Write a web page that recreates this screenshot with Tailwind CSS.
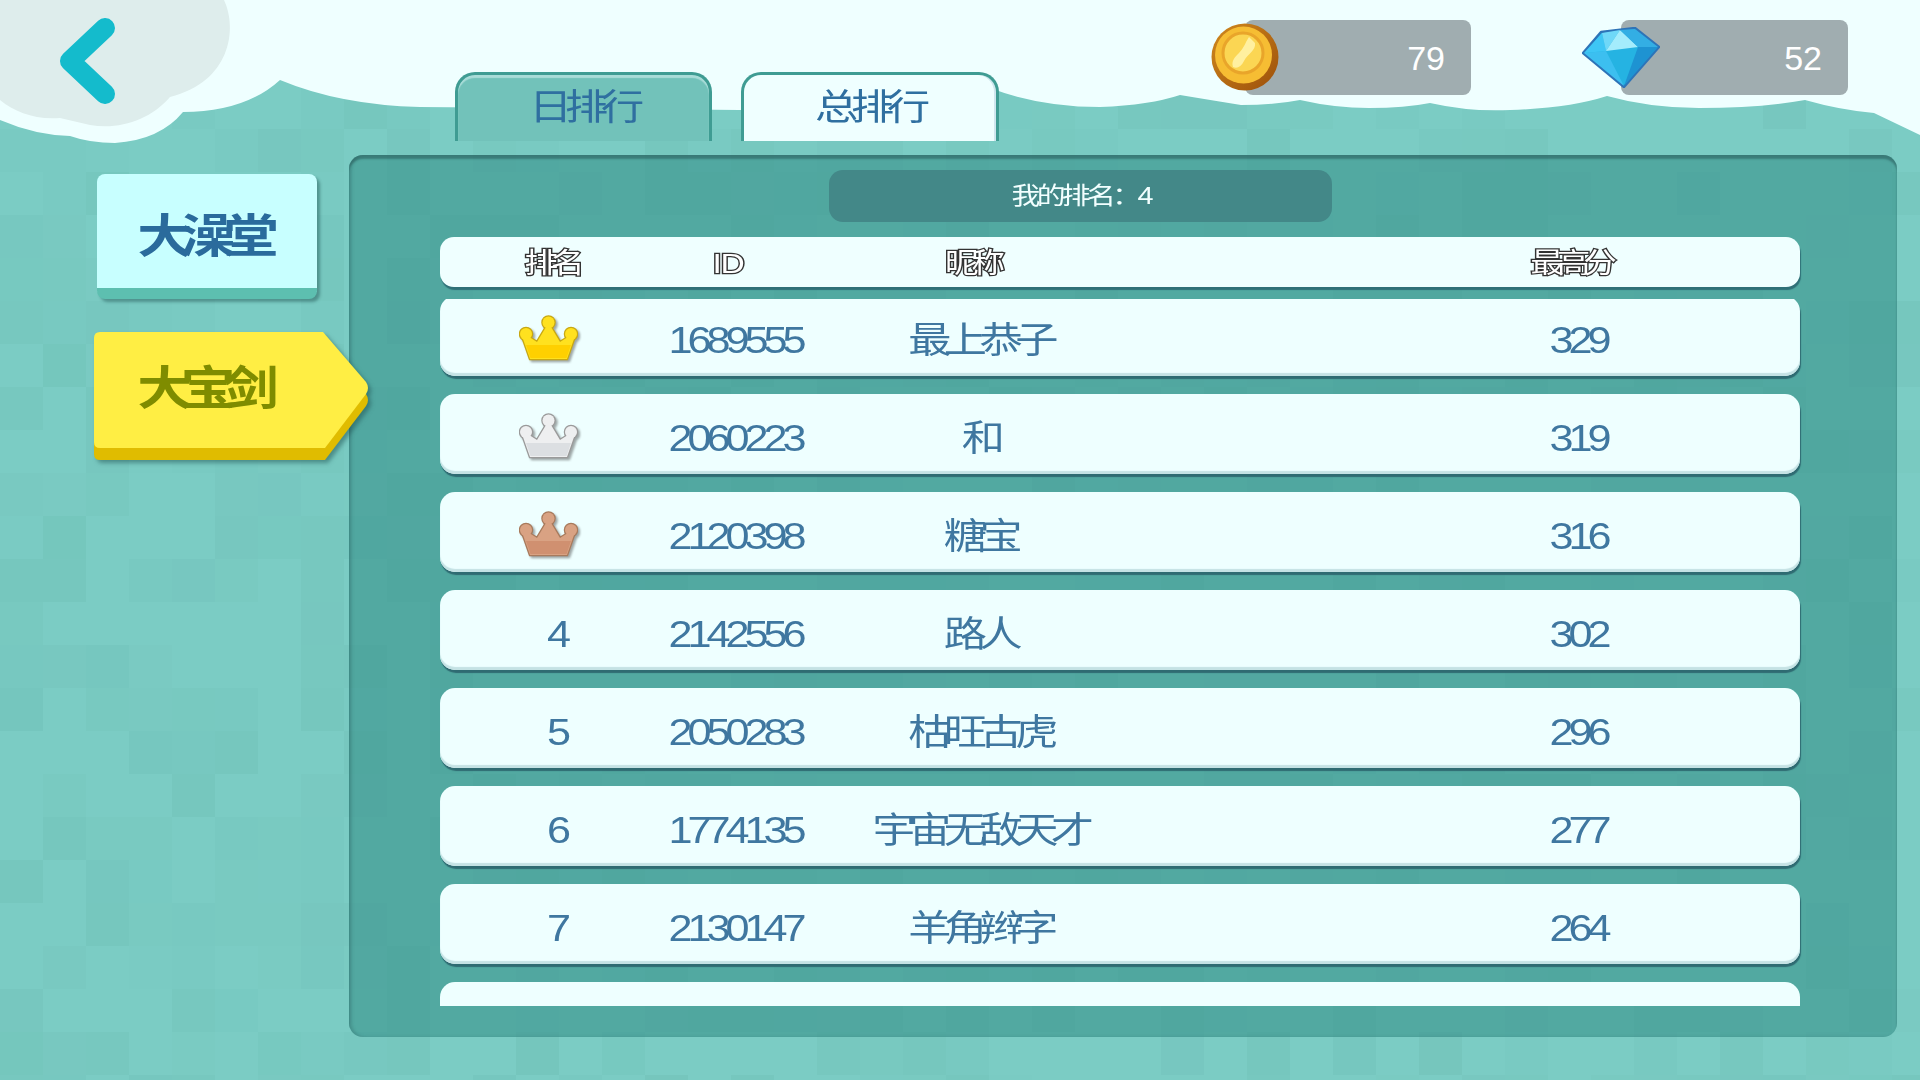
<!DOCTYPE html>
<html lang="zh">
  <head>
    <meta charset="UTF-8" />
    <title>排行榜</title>
    <script src="https://cdn.jsdelivr.net/npm/@tailwindcss/browser@4"></script>
  </head>
  <body class="bg-[#7bccc4]">
    <div class="relative h-[1080px] w-[1920px] overflow-hidden font-['Liberation_Sans','Noto_Sans_CJK_SC',sans-serif]">
      <!-- background mosaic, filled in by the script below -->
      <svg id="mosaic" class="absolute inset-0" width="1920" height="1080"></svg>

      <!-- crown shape shared by the top three rows -->
      <svg class="absolute" width="0" height="0">
        <symbol id="crown" viewBox="0 0 59 46">
          <circle cx="29.5" cy="7.5" r="6" />
          <circle cx="7" cy="19" r="6" />
          <circle cx="52" cy="19" r="6" />
          <path d="M4 24 L7 20 L18 27 L27 12 H32 L41 27 L52 20 L55 24 L48 44 H11 Z" />
        </symbol>
      </svg>

      <!-- cloud along the top -->
      <svg class="absolute inset-0" width="1920" height="160" viewBox="0 0 1920 160">
        <path fill="#efffff" d="M0 120 Q35 135 70 136 Q90 143 115 143 Q160 140 183 112 Q245 112 280 80 Q340 105 420 107 L740 110 Q870 110 990 88 Q1040 107 1100 107 Q1150 105 1180 95 Q1210 100 1241 105 Q1275 105 1300 100 Q1335 108 1369 108 Q1405 108 1430 103 Q1470 112 1510 110 Q1570 108 1607 96 Q1650 108 1699 108 Q1760 108 1805 100 Q1840 110 1874 113 L1920 135 V0 H0 Z" />
        <path fill="#deedec" d="M0 0 H224 C238 30 230 82 170 97 C150 120 120 130 90 125 L60 118 C35 120 15 112 0 100 Z" />
      </svg>

      <!-- top bar -->
      <header class="relative flex h-[141px] items-start">
        <div class="w-[455px] pl-[60px] pt-[18px]">
          <svg width="56" height="86" viewBox="60 18 56 86" fill="none" stroke="#14bbcc" stroke-width="20" stroke-linecap="round" stroke-linejoin="round">
            <path d="M105 28 L70 61 L105 94" />
          </svg>
        </div>

        <div class="mt-[72px] flex gap-[29px] text-[36px] leading-none text-[#2f6fa0]">
          <div class="flex h-[69px] w-[257px] items-center justify-center rounded-t-[20px] border-[3px] border-b-0 border-[#3f9c93] bg-[#72c2ba] shadow-[inset_0_3px_1px_#a9dcd8]">
            <span class="inline-block scale-x-[1.2] tracking-[-6px]">日排行</span>
          </div>
          <div class="flex h-[69px] w-[258px] items-center justify-center rounded-t-[20px] border-[3px] border-b-0 border-[#3f9c93] bg-[#efffff] pr-[2px] shadow-[inset_-2px_0_0_#cfe6ee]">
            <span class="inline-block scale-x-[1.2] tracking-[-6px]">总排行</span>
          </div>
        </div>

        <div class="relative ml-[246px] mt-[20px] flex h-[75px] w-[226px] items-center justify-end rounded-lg bg-[#a0adb0] pr-[26px] pt-[2px] text-[34px] text-white">
          79
          <svg class="absolute left-[-34px] top-[3px]" width="68" height="68" viewBox="0 0 68 68">
            <defs>
              <linearGradient id="coinEdge" x1="0" y1="0" x2="1" y2="1">
                <stop offset="0" stop-color="#d18a1e" />
                <stop offset="1" stop-color="#9c4f0a" />
              </linearGradient>
            </defs>
            <circle cx="34" cy="34" r="33.5" fill="url(#coinEdge)" />
            <circle cx="32.5" cy="32" r="28.5" fill="#f6bd33" />
            <circle cx="32" cy="30" r="20" fill="#fbd653" stroke="#e9a52a" stroke-width="3" />
            <path d="M38 14 L44 20 C45 28 37 30 33 38 C30 44 26 46 22 44 C20 38 24 34 28 30 C33 25 34 20 38 14 Z" fill="#fff0a0" />
          </svg>
        </div>

        <div class="relative ml-[150px] mt-[20px] flex h-[75px] w-[227px] items-center justify-end rounded-lg bg-[#a0adb0] pr-[26px] pt-[2px] text-[34px] text-white">
          52
          <svg class="absolute left-[-39px] top-[7px]" width="78" height="61" viewBox="0 0 78 61">
            <path d="M19 5 L53 1 L77 20 L42 60 L1 26 Z" fill="#25b3e2" stroke="#2d74b8" stroke-width="2.5" stroke-linejoin="round" />
            <path d="M2 26 L24 24 L42 59 Z" fill="#3cbff0" />
            <path d="M56 20 L76 20 L42 59 Z" fill="#1e93d2" />
            <path d="M20 6 L2 26 L24 24 Z" fill="#3ec6f5" />
            <path d="M20 6 L38 3 L24 24 Z" fill="#6fd8f8" />
            <path d="M38 3 L56 20 L24 24 Z" fill="#a4ecfc" />
            <path d="M38 3 L53 2 L76 20 L56 20 Z" fill="#33aee4" />
          </svg>
        </div>
      </header>

      <main class="relative mt-[14px] flex">
        <!-- category buttons -->
        <nav class="relative z-10 w-[349px] pt-[19px]">
          <div class="ml-[97px] flex h-[125px] w-[220px] items-center justify-center rounded-lg border-b-[11px] border-[#5dbfb0] bg-[#c8ffff] pr-[10px] pt-[10px] text-[46px] font-bold leading-none text-[#2a6b9c] shadow-[3px_3px_3px_rgba(30,80,80,0.45)]">
            <span class="inline-block scale-x-[1.2] tracking-[-10px]">大澡堂</span>
          </div>
          <div class="relative ml-[94px] mt-[33px] h-[128px] w-[275px]">
            <svg class="absolute inset-0 overflow-visible drop-shadow-[3px_3px_2px_rgba(30,80,80,0.5)]" width="275" height="128" viewBox="0 0 275 128">
              <path fill="#e0bc00" d="M6 12 H229 L272 62 Q276 68 272 74 L231 128 H6 Q0 128 0 122 V18 Q0 12 6 12 Z" />
              <path fill="#ffee44" d="M6 0 H229 L272 50 Q276 56 272 62 L231 116 H6 Q0 116 0 110 V6 Q0 0 6 0 Z" />
            </svg>
            <div class="relative flex h-[112px] w-[215px] items-center justify-center text-[46px] font-bold leading-none text-[#7f8c00]">
              <span class="inline-block scale-x-[1.2] tracking-[-10px]">大宝剑</span>
            </div>
          </div>
        </nav>

        <!-- ranking panel -->
        <section class="h-[882px] w-[1548px] rounded-[14px] bg-[#37918b]/60 pt-[15px] shadow-[inset_0_4px_2px_rgba(40,90,90,0.55),inset_3px_0_3px_rgba(40,90,90,0.25)]">
          <div class="ml-[480px] flex h-[52px] w-[503px] items-center justify-center rounded-[14px] bg-[#438888] text-[24px] leading-none text-[#f2ffff]">
            <span class="inline-block scale-x-[1.2] tracking-[-3px]">我的排名：4</span>
          </div>

          <div class="ml-[91px] mt-[15px] grid h-[50px] w-[1360px] grid-cols-[198px_156px_331px_1fr_200px] items-center rounded-[14px] bg-[#efffff] pl-[12px] pr-[130px] pt-[3px] text-center text-[28px] leading-none text-white shadow-[1px_3px_1px_#2f7077] [-webkit-text-stroke:2.5px_#333333] [paint-order:stroke_fill]">
            <span class="inline-block scale-x-[1.2] tracking-[-6px]">排名</span>
            <span class="inline-block scale-x-[1.2] tracking-[-1px]">ID</span>
            <span class="inline-block scale-x-[1.2] tracking-[-6px]">昵称</span>
            <span class="col-start-5 inline-block scale-x-[1.2] tracking-[-6px]">最高分</span>
          </div>

          <div class="ml-[91px] mt-[12px] h-[707px] w-[1363px] overflow-hidden">
            <ul class="-mt-[3px] flex flex-col gap-[18px] text-[36px] leading-none text-[#3f77a0]">
              <li class="grid h-[80px] w-[1360px] grid-cols-[198px_154px_335px_1fr_200px] items-center rounded-[15px] bg-[#eeffff] pl-[20px] pr-[122px] pt-[10px] text-center shadow-[inset_0_-3px_1px_#c4e2e4,1px_3px_1px_#2f6b72]">
                <span class="flex justify-center">
                  <svg class="mb-[6px] mr-[22px] drop-shadow-[2px_2px_1px_rgba(60,60,60,0.45)]" width="59" height="46" viewBox="0 0 59 46">
                    <use href="#crown" width="59" height="46" fill="#ffe11f" stroke="#c8a812" stroke-width="2.5" stroke-linejoin="round" />
                    <use href="#crown" width="59" height="46" fill="#ffe11f" />
                    <path d="M7 30 H52 L47.5 43 H11.5 Z" fill="#ffd000" />
                  </svg>
                </span>
                <span class="inline-block scale-x-[1.2] tracking-[-4.2px]">1689555</span>
                <span class="inline-block scale-x-[1.2] tracking-[-6.3px]">最上恭子</span>
                <span class="col-start-5 inline-block scale-x-[1.2] tracking-[-4.2px]">329</span>
              </li>
              <li class="grid h-[80px] w-[1360px] grid-cols-[198px_154px_335px_1fr_200px] items-center rounded-[15px] bg-[#eeffff] pl-[20px] pr-[122px] pt-[10px] text-center shadow-[inset_0_-3px_1px_#c4e2e4,1px_3px_1px_#2f6b72]">
                <span class="flex justify-center">
                  <svg class="mb-[6px] mr-[22px] drop-shadow-[2px_2px_1px_rgba(60,60,60,0.45)]" width="59" height="46" viewBox="0 0 59 46">
                    <use href="#crown" width="59" height="46" fill="#eeeff0" stroke="#9a9a9a" stroke-width="2.5" stroke-linejoin="round" />
                    <use href="#crown" width="59" height="46" fill="#eeeff0" />
                    <path d="M7 30 H52 L47.5 43 H11.5 Z" fill="#dcdfe2" />
                  </svg>
                </span>
                <span class="inline-block scale-x-[1.2] tracking-[-4.2px]">2060223</span>
                <span class="inline-block scale-x-[1.2] tracking-[-6.3px]">和</span>
                <span class="col-start-5 inline-block scale-x-[1.2] tracking-[-4.2px]">319</span>
              </li>
              <li class="grid h-[80px] w-[1360px] grid-cols-[198px_154px_335px_1fr_200px] items-center rounded-[15px] bg-[#eeffff] pl-[20px] pr-[122px] pt-[10px] text-center shadow-[inset_0_-3px_1px_#c4e2e4,1px_3px_1px_#2f6b72]">
                <span class="flex justify-center">
                  <svg class="mb-[6px] mr-[22px] drop-shadow-[2px_2px_1px_rgba(60,60,60,0.45)]" width="59" height="46" viewBox="0 0 59 46">
                    <use href="#crown" width="59" height="46" fill="#d9a283" stroke="#a87a5c" stroke-width="2.5" stroke-linejoin="round" />
                    <use href="#crown" width="59" height="46" fill="#d9a283" />
                    <path d="M7 30 H52 L47.5 43 H11.5 Z" fill="#d09070" />
                  </svg>
                </span>
                <span class="inline-block scale-x-[1.2] tracking-[-4.2px]">2120398</span>
                <span class="inline-block scale-x-[1.2] tracking-[-6.3px]">糖宝</span>
                <span class="col-start-5 inline-block scale-x-[1.2] tracking-[-4.2px]">316</span>
              </li>
              <li class="grid h-[80px] w-[1360px] grid-cols-[198px_154px_335px_1fr_200px] items-center rounded-[15px] bg-[#eeffff] pl-[20px] pr-[122px] pt-[10px] text-center shadow-[inset_0_-3px_1px_#c4e2e4,1px_3px_1px_#2f6b72]">
                <span class="inline-block scale-x-[1.2]">4</span>
                <span class="inline-block scale-x-[1.2] tracking-[-4.2px]">2142556</span>
                <span class="inline-block scale-x-[1.2] tracking-[-6.3px]">路人</span>
                <span class="col-start-5 inline-block scale-x-[1.2] tracking-[-4.2px]">302</span>
              </li>
              <li class="grid h-[80px] w-[1360px] grid-cols-[198px_154px_335px_1fr_200px] items-center rounded-[15px] bg-[#eeffff] pl-[20px] pr-[122px] pt-[10px] text-center shadow-[inset_0_-3px_1px_#c4e2e4,1px_3px_1px_#2f6b72]">
                <span class="inline-block scale-x-[1.2]">5</span>
                <span class="inline-block scale-x-[1.2] tracking-[-4.2px]">2050283</span>
                <span class="inline-block scale-x-[1.2] tracking-[-6.3px]">枯旺古虎</span>
                <span class="col-start-5 inline-block scale-x-[1.2] tracking-[-4.2px]">296</span>
              </li>
              <li class="grid h-[80px] w-[1360px] grid-cols-[198px_154px_335px_1fr_200px] items-center rounded-[15px] bg-[#eeffff] pl-[20px] pr-[122px] pt-[10px] text-center shadow-[inset_0_-3px_1px_#c4e2e4,1px_3px_1px_#2f6b72]">
                <span class="inline-block scale-x-[1.2]">6</span>
                <span class="inline-block scale-x-[1.2] tracking-[-4.2px]">1774135</span>
                <span class="inline-block scale-x-[1.2] tracking-[-6.3px]">宇宙无敌天才</span>
                <span class="col-start-5 inline-block scale-x-[1.2] tracking-[-4.2px]">277</span>
              </li>
              <li class="grid h-[80px] w-[1360px] grid-cols-[198px_154px_335px_1fr_200px] items-center rounded-[15px] bg-[#eeffff] pl-[20px] pr-[122px] pt-[10px] text-center shadow-[inset_0_-3px_1px_#c4e2e4,1px_3px_1px_#2f6b72]">
                <span class="inline-block scale-x-[1.2]">7</span>
                <span class="inline-block scale-x-[1.2] tracking-[-4.2px]">2130147</span>
                <span class="inline-block scale-x-[1.2] tracking-[-6.3px]">羊角辫字</span>
                <span class="col-start-5 inline-block scale-x-[1.2] tracking-[-4.2px]">264</span>
              </li>
              <li class="h-[80px] w-[1360px] rounded-[15px] bg-[#eeffff]"></li>
            </ul>
          </div>
        </section>
      </main>
    </div>

    <script>
      // faint checker blocks behind everything
      const mosaic = document.getElementById("mosaic");
      let seed = 7;
      function rand() {
        seed = (seed * 16807) % 2147483647;
        return seed / 2147483647;
      }
      let rects = "";
      for (let y = 0; y < 1080; y += 43) {
        for (let x = 0; x < 1920; x += 43) {
          if (rand() < 0.6) {
            const o = (0.1 + rand() * 0.5).toFixed(2);
            rects += `<rect x="${x}" y="${y}" width="43" height="43" fill="#72c2b9" opacity="${o}"/>`;
          }
        }
      }
      mosaic.innerHTML = rects;
    </script>
  </body>
</html>
